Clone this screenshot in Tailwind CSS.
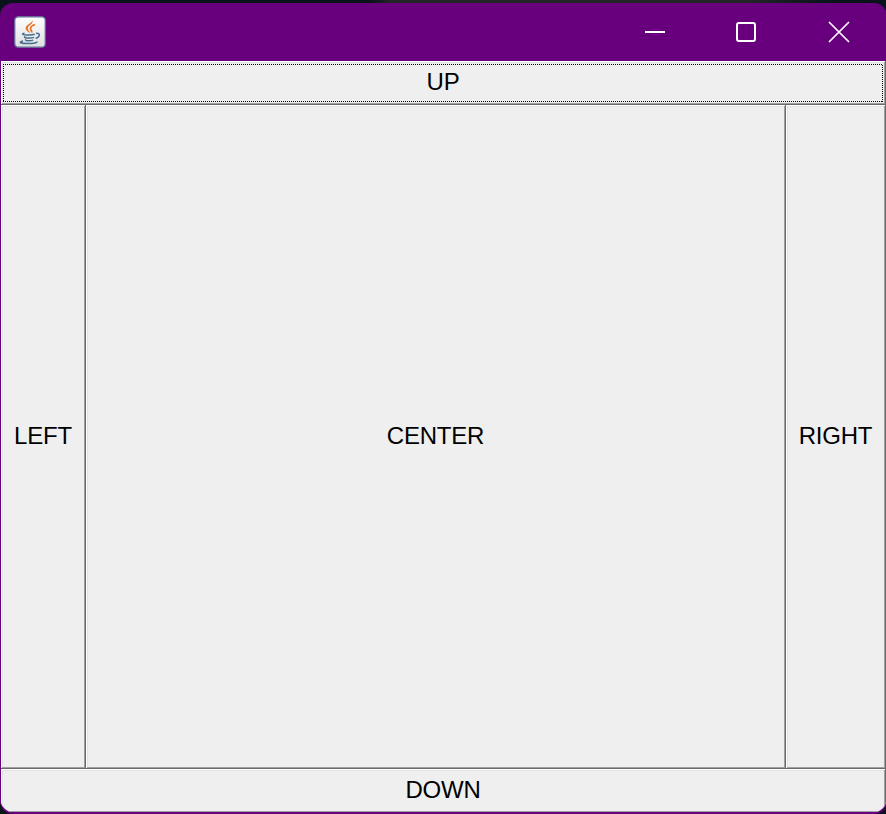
<!DOCTYPE html>
<html lang="en">
<head>
<meta charset="utf-8">
<title>Frame</title>
<script src="https://cdn.jsdelivr.net/npm/@tailwindcss/browser@4"></script>
</head>
<body class="w-[886px] h-[814px] overflow-hidden pt-[3px] bg-[linear-gradient(90deg,#08141a_0,#08141a_370px,#222425_390px,#222425_750px,#08141a_830px)] font-['Liberation_Sans',Arial,sans-serif] text-2xl leading-7 tracking-[-0.2px] text-black">
<div class="w-[887px] h-[811px] rounded-[13px] overflow-hidden bg-[#68007e] flex flex-col pl-px pr-px pb-[2px]">
  <header class="h-[58px] shrink-0 flex items-center justify-between pl-[13px] pr-[37px]">
    <svg class="w-8 h-8" viewBox="0 0 32 32" fill="none">
      <defs><linearGradient id="tile" x1="0" y1="0" x2="0" y2="1"><stop stop-color="#fff"/><stop offset="1" stop-color="#dfdfe2"/></linearGradient></defs>
      <rect x=".8" y=".8" width="30.4" height="30.4" rx="3.5" fill="url(#tile)" stroke="#62739a" stroke-width="1.2"/>
      <path d="M18.300 4.200c1.600 3.800-4.500 5-4.500 8 0 2 1.700 3 2.500 4.800-2.800-1.200-4.700-2.900-4.700-5 0-3.300 6.300-4.400 6.700-7.800Z" fill="#e8701b"/>
      <path d="M21 8.500c-2.800 1.100-4.600 2.300-4.600 4 0 1.500 1.700 2 1.200 4" stroke="#e8701b" stroke-width="1.700"/>
      <path d="M10.500 17.300c-2.600.5-2.700 1.100 0 1.400 3.500.5 8.300.2 10.300-.4M10.800 20.300c-.8 1.100.3 1.500 2.500 1.700 2.600.2 5.200 0 6.700-.6M11.800 23.200c-.7.9 0 1.300 1.600 1.500 2.300.3 4.300 0 5.700-.6M22 17.500c4.500-1.100 4.500 3.500-.4 4.900M9 25c-5.500 1.300-1.800 2.600 4.500 2.600 6 0 10-.8 9.500-2.100" stroke="#466f8c" stroke-width="1.500"/>
    </svg>
    <div class="flex items-center">
      <svg class="w-5 h-5 mr-[71px]" viewBox="0 0 20 20"><path d="M0 9h20v2H0z" fill="#fff"/></svg>
      <svg class="w-5 h-5 mr-[73px]" viewBox="0 0 20 20" fill="none"><rect x="1" y="1" width="18" height="18" rx="2" stroke="#fff" stroke-width="2"/></svg>
      <svg class="w-5 h-5" viewBox="0 0 20 20" fill="none" overflow="visible"><path d="M0 0 20 20M20 0 0 20" stroke="#fff" stroke-width="1.700"/></svg>
    </div>
  </header>
  <main class="flex-1 min-h-0 flex flex-col overflow-hidden rounded-b-[12px]">
    <button class="relative h-11 shrink-0 bg-[#efefef] pb-[2px] pr-px shadow-[inset_-1px_-1px_#696969,inset_1px_1px_#fff,inset_-2px_-2px_#a0a0a0,inset_2px_2px_#e3e3e3]">UP
      <svg class="absolute left-[2px] top-[3px] w-[880px] h-[38px]" viewBox="0 0 880 38" fill="none" shape-rendering="crispEdges" stroke="#000" stroke-dasharray="1 1"><path d="M0 .5H880M0 37.500H880M.5 0V38M879.500 1V38"/></svg>
    </button>
    <div class="h-[664px] shrink-0 flex">
      <button class="w-[85px] bg-[#efefef] pb-[2px] pr-px shadow-[inset_-1px_-1px_#696969,inset_1px_1px_#fff,inset_-2px_-2px_#a0a0a0,inset_2px_2px_#e3e3e3]">LEFT</button>
      <button class="w-[700px] bg-[#efefef] pb-[2px] pr-px shadow-[inset_-1px_-1px_#696969,inset_1px_1px_#fff,inset_-2px_-2px_#a0a0a0,inset_2px_2px_#e3e3e3]">CENTER</button>
      <button class="w-[100px] bg-[#efefef] pb-[2px] pr-px shadow-[inset_-1px_-1px_#696969,inset_1px_1px_#fff,inset_-2px_-2px_#a0a0a0,inset_2px_2px_#e3e3e3]">RIGHT</button>
    </div>
    <button class="h-11 shrink-0 bg-[#efefef] pb-[2px] pr-px shadow-[inset_-1px_-1px_#696969,inset_1px_1px_#fff,inset_-2px_-2px_#a0a0a0,inset_2px_2px_#e3e3e3]">DOWN</button>
  </main>
</div>
</body>
</html>
